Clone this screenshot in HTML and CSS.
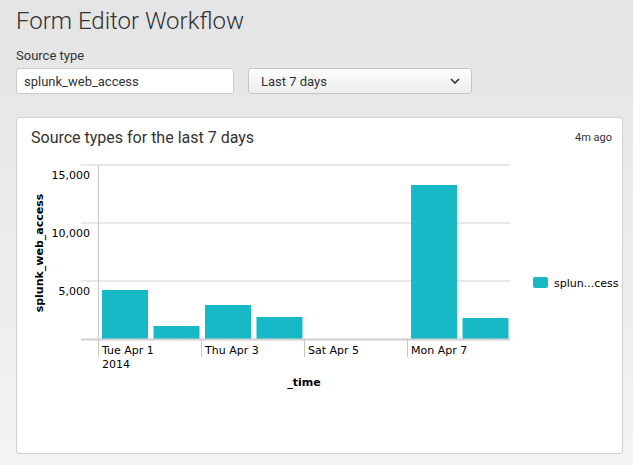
FILE: index.html
```html
<!DOCTYPE html>
<html>
<head>
<meta charset="utf-8">
<title>Form Editor Workflow</title>
<link rel="stylesheet" href="styles.css">
</head>
<body>
<header class="dash-header">
  <h1 class="dash-title">Form Editor Workflow</h1>
</header>
<form class="fieldset">
  <div class="field">
    <label class="field-label" for="st">Source type</label>
    <input id="st" class="text-input" type="text" value="splunk_web_access">
  </div>
  <div class="field">
    <button type="button" class="dropdown">
      <span>Last 7 days</span>
      <svg class="chevron" width="10" height="6" viewBox="0 0 10 6"><path d="M1 1 L5 5 L9 1" fill="none" stroke="#333" stroke-width="1.6"/></svg>
    </button>
  </div>
</form>
<section class="panel">
  <div class="panel-head">
    <h2 class="panel-title">Source types for the last 7 days</h2>
    <span class="panel-ago">4m ago</span>
  </div>
  <svg class="chart" width="605" height="303" viewBox="0 0 605 303">
    <g class="grid">
      <line x1="64" y1="15" x2="493" y2="15"/>
      <line x1="64" y1="73" x2="493" y2="73"/>
      <line x1="64" y1="131" x2="493" y2="131"/>
    </g>
    <g class="bars">
      <rect x="85" y="140" width="46" height="49"/>
      <rect x="136.5" y="176" width="46" height="13"/>
      <rect x="188" y="155" width="46" height="34"/>
      <rect x="239.5" y="167" width="46" height="22"/>
      <rect x="394" y="35" width="46" height="154"/>
      <rect x="445.5" y="168" width="46" height="21"/>
    </g>
    <line class="baseline" x1="64" y1="189.5" x2="493" y2="189.5"/>
    <g class="axis">
      <line x1="81.5" y1="15" x2="81.5" y2="207"/>
      <line x1="184.5" y1="189" x2="184.5" y2="207"/>
      <line x1="287.5" y1="189" x2="287.5" y2="207"/>
      <line x1="390.5" y1="189" x2="390.5" y2="207"/>
    </g>
    <g class="ylabels">
      <text x="73" y="29">15,000</text>
      <text x="73" y="87">10,000</text>
      <text x="73" y="145">5,000</text>
    </g>
    <g class="xlabels">
      <text x="85" y="204">Tue Apr 1</text>
      <text x="85" y="218">2014</text>
      <text x="188" y="204">Thu Apr 3</text>
      <text x="291" y="204">Sat Apr 5</text>
      <text x="394" y="204">Mon Apr 7</text>
    </g>
    <text class="axis-title" x="287" y="236" text-anchor="middle">_time</text>
    <text class="axis-title" transform="translate(26,103) rotate(-90)" text-anchor="middle">splunk_web_access</text>
    <g class="legend">
      <rect x="516" y="127" width="15" height="11" rx="2"/>
      <text x="537" y="137">splun...cess</text>
    </g>
  </svg>
</section>
</body>
</html>
```
FILE: styles.css
```css
html {
  min-height: 100%;
  background: linear-gradient(#e4e4e4, #f3f3f3);
}
body {
  margin: 0;
  padding: 0 10px 0 16px;
  font-family: Roboto, "Liberation Sans", sans-serif;
  color: #333;
}
.dash-header {
  padding-top: 6px;
}
.dash-title {
  margin: 0;
  font-size: 24px;
  line-height: 30px;
  font-weight: 300;
  color: #333;
}
.fieldset {
  display: flex;
  align-items: flex-end;
  gap: 14px;
  margin: 12px 0 0;
}
.field {
  display: flex;
  flex-direction: column;
}
.field-label {
  font-size: 13px;
  line-height: 16px;
  margin-bottom: 4px;
  color: #333;
}
.text-input {
  box-sizing: border-box;
  width: 218px;
  height: 26px;
  margin: 0;
  padding: 0 7px;
  border: 1px solid #ccc;
  border-radius: 3px;
  background: #fff;
  font-family: Roboto, "Liberation Sans", sans-serif;
  font-size: 13px;
  color: #333;
  outline: none;
}
.dropdown {
  box-sizing: border-box;
  width: 224px;
  height: 26px;
  margin: 0;
  padding: 0 11px 0 12px;
  display: flex;
  align-items: center;
  justify-content: space-between;
  border: 1px solid #c6c6c6;
  border-radius: 3px;
  background: linear-gradient(#fdfdfd, #ededed);
  font-family: Roboto, "Liberation Sans", sans-serif;
  font-size: 13px;
  color: #333;
}
.chevron {
  display: block;
}
.panel {
  box-sizing: border-box;
  margin-top: 23px;
  background: #fff;
  border: 1px solid #cfcfcf;
  border-radius: 3px;
}
.panel-head {
  display: flex;
  justify-content: space-between;
  align-items: flex-start;
  padding: 10px 10px 2px 14px;
}
.panel-title {
  margin: 0;
  font-size: 16px;
  line-height: 20px;
  font-weight: 400;
  color: #333;
}
.panel-ago {
  font-size: 11px;
  line-height: 14px;
  margin-top: 3px;
  color: #333;
}
.chart {
  display: block;
  font-family: "DejaVu Sans", Verdana, sans-serif;
  font-size: 11px;
}
.grid line {
  stroke: #e8e8e8;
  stroke-width: 2;
}
.bars rect {
  fill: #17b9c6;
}
.baseline {
  stroke: #cfcfcf;
  stroke-width: 2;
}
.axis line {
  stroke: #c8c8c8;
  stroke-width: 1;
}
.ylabels text {
  text-anchor: end;
  fill: #000;
}
.xlabels text {
  fill: #000;
}
.axis-title {
  font-weight: bold;
  fill: #000;
}
.legend rect {
  fill: #17b9c6;
}
.legend text {
  fill: #000;
}
```
